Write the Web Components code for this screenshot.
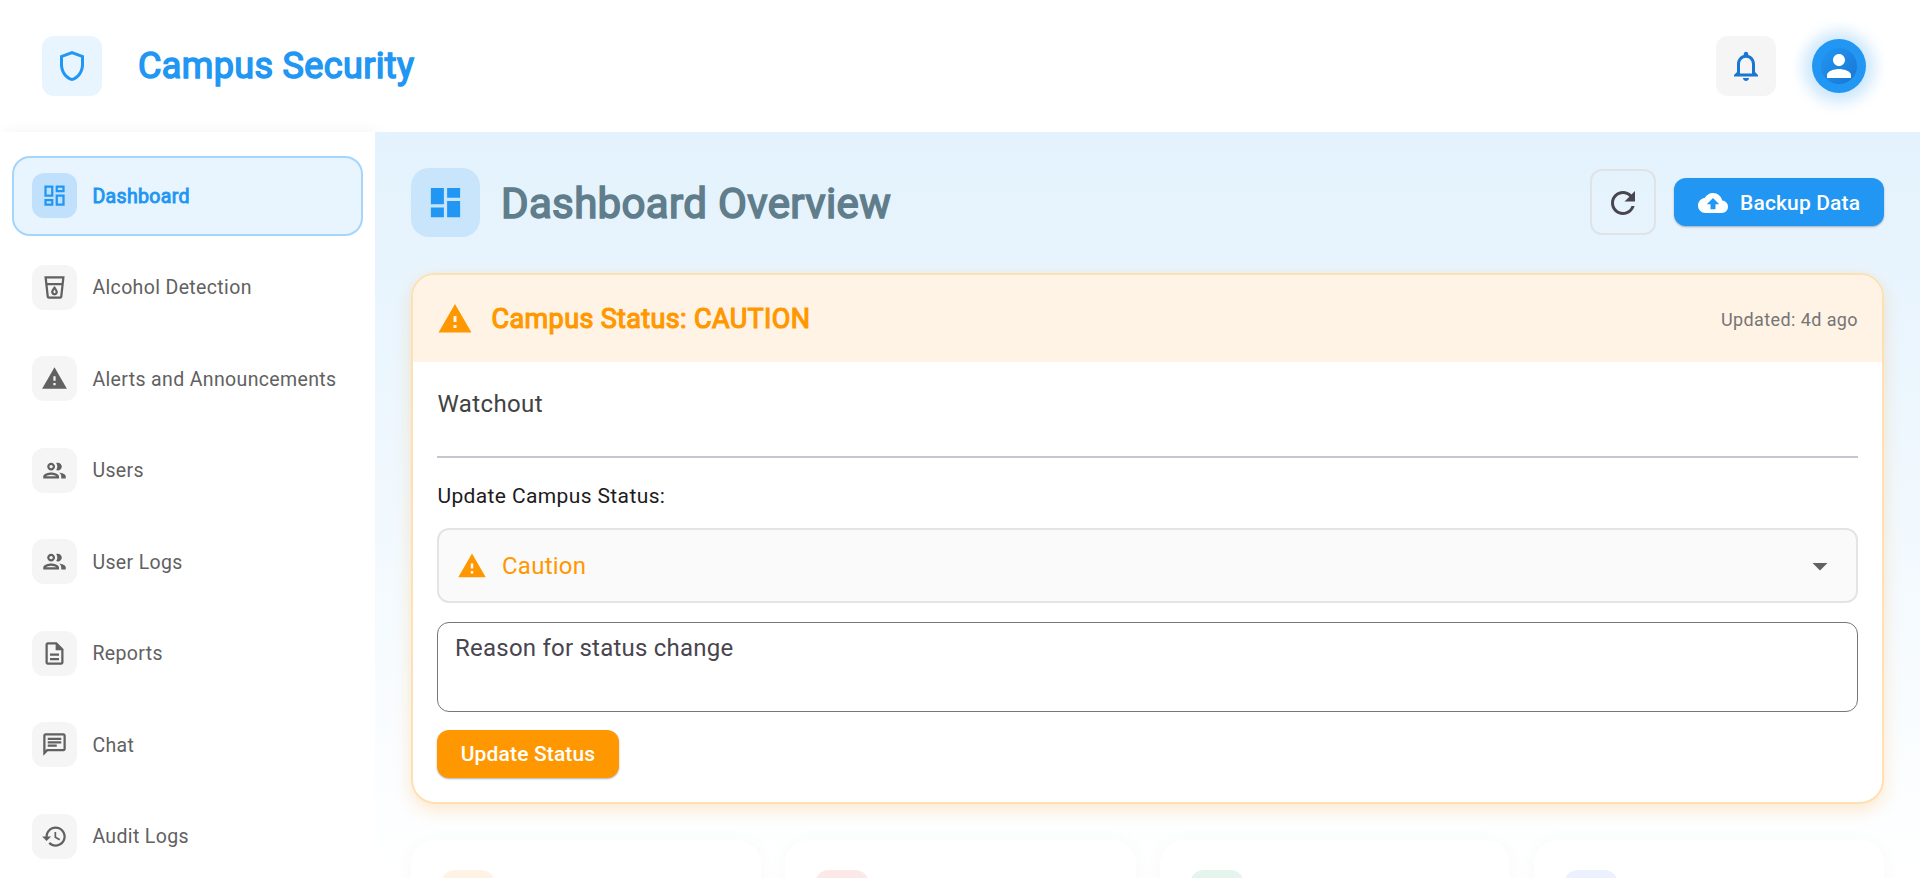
<!DOCTYPE html>
<html lang="en">
<head>
<meta charset="utf-8">
<title>Campus Security</title>
<style>
html,body{margin:0;height:100%;overflow:hidden;background:#fff;font-family:Roboto,"Liberation Sans",sans-serif}
</style>
</head>
<body>
<campus-app></campus-app>
<script>
const ICONS={
shield:'<path d="M12 2 4 5v6.09c0 5.05 3.41 9.76 8 10.91 4.59-1.15 8-5.86 8-10.91V5l-8-3zm6 9.09c0 4-2.55 7.7-6 8.83-3.45-1.13-6-4.82-6-8.83v-4.7l6-2.25 6 2.25v4.7z"/>',
bell:'<path d="M12 22c1.1 0 2-.9 2-2h-4c0 1.1.9 2 2 2zm6-6v-5c0-3.07-1.63-5.64-4.5-6.32V4c0-.83-.67-1.5-1.5-1.5s-1.5.67-1.5 1.5v.68C7.64 5.36 6 7.92 6 11v5l-2 2v1h16v-1l-2-2zm-2 1H8v-6c0-2.48 1.51-4.5 4-4.5s4 2.02 4 4.5v6z"/>',
person:'<path d="M12 12c2.21 0 4-1.79 4-4s-1.79-4-4-4-4 1.79-4 4 1.79 4 4 4zm0 2c-2.67 0-8 1.34-8 4v2h16v-2c0-2.66-5.33-4-8-4z"/>',
dashOut:'<path d="M19 5v2h-4V5h4M9 5v6H5V5h4m10 8v6h-4v-6h4M9 17v2H5v-2h4M21 3h-8v6h8V3zM11 3H3v10h8V3zm10 8h-8v10h8V11zm-10 4H3v6h8v-6z"/>',
dash:'<path d="M3 13h8V3H3v10zm0 8h8v-6H3v6zm10 0h8V11h-8v10zm0-18v6h8V3h-8z"/>',
drink:'<path d="M3 2l2.01 18.23C5.13 21.23 5.97 22 7 22h10c1.03 0 1.87-.77 1.99-1.77L21 2H3zm14 18H7.01L5.89 10h12.23L17 20zm1.33-12H5.67l-.44-4h13.54l-.44 4zM12 19c1.66 0 3-1.34 3-3 0-2-3-5.4-3-5.4S9 14 9 16c0 1.66 1.34 3 3 3zm0-5.22c.62.89 1 1.7 1 2.22 0 .55-.45 1-1 1s-1-.45-1-1c0-.52.38-1.33 1-2.22z"/>',
warn:'<path d="M1 21h22L12 2 1 21zm12-3h-2v-2h2v2zm0-4h-2v-4h2v4z"/>',
people:'<path d="M9 13.75c-2.34 0-7 1.17-7 3.5V19h14v-1.75c0-2.33-4.66-3.5-7-3.5zM4.34 17c.84-.58 2.87-1.25 4.66-1.25s3.82.67 4.66 1.25H4.34zM9 12c1.93 0 3.5-1.57 3.5-3.5S10.93 5 9 5 5.5 6.57 5.5 8.5 7.07 12 9 12zm0-5c.83 0 1.5.67 1.5 1.5S9.83 10 9 10s-1.5-.67-1.5-1.5S8.17 7 9 7zm7.04 6.81c1.16.84 1.96 1.96 1.96 3.44V19h4v-1.75c0-2.02-3.5-3.17-5.96-3.44zM15 12c1.93 0 3.5-1.57 3.5-3.5S16.93 5 15 5c-.54 0-1.04.13-1.5.35.63.89 1 1.98 1 3.15s-.37 2.26-1 3.15c.46.22.96.35 1.5.35z"/>',
doc:'<path d="M8 16h8v2H8zm0-4h8v2H8zm6-10H6c-1.1 0-2 .9-2 2v16c0 1.1.89 2 1.99 2H18c1.1 0 2-.9 2-2V8l-6-6zm4 18H6V4h7v5h5v11z"/>',
chat:'<path d="M4 4h16v12H5.17L4 17.17V4m0-2c-1.1 0-1.99.9-1.99 2L2 22l4-4h14c1.1 0 2-.9 2-2V4c0-1.1-.9-2-2-2H4zm2 10h8v2H6v-2zm0-3h12v2H6V9zm0-3h12v2H6V6z"/>',
history:'<path d="M13 3c-4.97 0-9 4.03-9 9H1l3.89 3.89.07.14L9 12H6c0-3.87 3.13-7 7-7s7 3.13 7 7-3.13 7-7 7c-1.93 0-3.68-.79-4.94-2.06l-1.42 1.42C8.27 19.99 10.51 21 13 21c4.97 0 9-4.03 9-9s-4.03-9-9-9zm-1 5v5l4.25 2.52.77-1.28-3.52-2.09V8H12z"/>',
refresh:'<path d="M17.65 6.35C16.2 4.9 14.21 4 12 4c-4.42 0-7.99 3.58-7.99 8s3.57 8 7.99 8c3.73 0 6.84-2.55 7.73-6h-2.08c-.82 2.33-3.04 4-5.65 4-3.31 0-6-2.69-6-6s2.69-6 6-6c1.66 0 3.14.69 4.22 1.78L13 11h7V4l-2.35 2.35z"/>',
cloud:'<path d="M19.35 10.04C18.67 6.59 15.64 4 12 4 9.11 4 6.6 5.64 5.35 8.04 2.34 8.36 0 10.91 0 14c0 3.31 2.69 6 6 6h13c2.76 0 5-2.24 5-5 0-2.64-2.05-4.78-4.65-4.96zM14 13v4h-4v-4H7l5-5 5 5h-3z"/>',
drop:'<path d="M7 10l5 5 5-5z"/>'
};
const attr=(e,n)=>e.getAttribute(n)||'';
function define(name,css,html){
  customElements.define(name,class extends HTMLElement{
    constructor(){
      super();
      const t=document.createElement('template');
      t.innerHTML='<style>'+css+'</style>'+html;
      this.attachShadow({mode:'open'}).append(t.content.cloneNode(true));
    }
  });
}

customElements.define('md-icon',class extends HTMLElement{
  connectedCallback(){
    if(this.shadowRoot)return;
    const s=attr(this,'size')||24;
    this.attachShadow({mode:'open'}).innerHTML=
      `<style>:host{display:block;flex:none;width:${s}px;height:${s}px}svg{display:block;width:100%;height:100%;fill:currentColor}</style><svg viewBox="0 0 24 24">${ICONS[attr(this,'name')]}</svg>`;
  }
});

define('app-header',`
:host{display:flex;align-items:center;height:132px;padding:0 54px 0 42px;box-sizing:border-box;background:#fff}
.box{width:60px;height:60px;border-radius:12px;display:grid;place-items:center;background:#e8f4fe;color:#2196f3}
h1{margin:0 auto 0 36px;font-size:36px;font-weight:400;line-height:48px;letter-spacing:.35px;color:#2196f3;-webkit-text-stroke:1.5px #2196f3;white-space:nowrap}
.bell{background:#f5f5f5;color:#1976d2}
.avatar{margin-left:36px;width:54px;height:54px;border-radius:50%;background:#2196f3;display:grid;place-items:center;box-shadow:0 1px 14px 9px rgba(33,150,243,.22)}
.inner{width:36px;height:36px;border-radius:50%;background:linear-gradient(135deg,#2196f3,#1976d2);color:#fff}
`,`<div class="box"><md-icon name="shield" size="36"></md-icon></div><h1>Campus Security</h1>
<div class="box bell"><md-icon name="bell" size="36"></md-icon></div>
<div class="avatar"><div class="inner"><md-icon name="person" size="36"></md-icon></div></div>`);

define('nav-item',`
:host{display:flex;align-items:center;box-sizing:border-box;height:79.5px;padding:0 18px 0 18.4px;gap:15px;border:2.25px solid transparent;border-radius:18px;color:#616161;font-size:19.5px;letter-spacing:.36px;white-space:nowrap}
.tile{flex:none;width:45px;height:45px;border-radius:12px;background:#f5f5f5;display:grid;place-items:center}
.label{padding-top:.8px}
:host([active]){background:#e8f4fe;border-color:#a6d5fa;color:#2196f3}
:host([active]) .tile{background:#c0e0fc}
:host([active]) .label{-webkit-text-stroke:.9px #2196f3}
`,'<div class="tile"><slot name="icon"></slot></div><div class="label"><slot></slot></div>');

define('app-sidebar',`
:host{display:flex;flex-direction:column;gap:12px;box-sizing:border-box;width:375px;padding:24px 12px 0;background:#fff;box-shadow:3px 0 15px rgba(0,0,0,.05)}
nav-item{flex:none}
`,[['dashOut','Dashboard',1],['drink','Alcohol Detection'],['warn','Alerts and Announcements'],['people','Users'],['people','User Logs'],['doc','Reports'],['chat','Chat'],['history','Audit Logs']]
.map(([i,t,a])=>`<nav-item${a?' active':''}><md-icon slot="icon" name="${i}" size="27"></md-icon>${t}</nav-item>`).join(''));

define('page-title',`
:host{display:flex;align-items:center;height:69px}
.tile{width:69px;height:69px;border-radius:18px;background:#c9e5fb;color:#2196f3;display:grid;place-items:center}
h2{margin:0 auto 0 21px;padding-top:3px;font-size:42px;font-weight:400;line-height:56px;letter-spacing:.35px;color:#607d8b;-webkit-text-stroke:1.6px #607d8b}
.refresh{width:66px;height:66px;margin-bottom:1px;box-sizing:border-box;border:2px solid #dfe3e6;border-radius:12px;display:grid;place-items:center;color:#49454f}
.refresh md-icon{margin-top:1px}
.backup{margin-left:18px;margin-bottom:1px;width:210px;height:48px;box-sizing:border-box;border-radius:12px;background:#2196f3;color:#fff;display:flex;align-items:center;padding:1px 0 0 24px;gap:12px;font-size:21px;font-weight:500;letter-spacing:.15px;white-space:nowrap;box-shadow:0 1px 2px rgba(0,0,0,.3)}
.backup span{padding-top:1px}
`,`<div class="tile"><md-icon name="dash" size="39"></md-icon></div><h2>Dashboard Overview</h2>
<div class="refresh"><md-icon name="refresh" size="36"></md-icon></div>
<div class="backup"><md-icon name="cloud" size="30"></md-icon><span>Backup Data</span></div>`);

define('status-card',`
:host{display:block;box-sizing:border-box;height:531px;margin-top:36px;border:2.25px solid #ffe0b2;border-radius:24px;background:#fff;box-shadow:0 6px 18px rgba(255,152,0,.2);overflow:hidden}
header{display:flex;align-items:center;height:87px;padding:0 24px;background:#fff3e5;color:#ff9800}
h3{margin:0 auto 0 18.6px;font-size:27px;font-weight:400;letter-spacing:.36px;-webkit-text-stroke:1.2px #ff9800}
.upd{padding-top:1.5px;font-size:18px;letter-spacing:.4px;color:#757575}
.body{padding:24px;display:flex;flex-direction:column}
.msg{padding-left:.5px;font-size:24px;line-height:36px;letter-spacing:.38px;color:#424242}
hr{margin:34px 0 0;border:0;height:2px;width:100%;background:#cac4d0}
.lab{margin-top:23px;padding-left:.4px;font-size:21px;line-height:30px;letter-spacing:.38px;color:#1d1b20}
.select{margin-top:17px;height:75px;box-sizing:border-box;border:2px solid #e4e4e4;border-radius:12px;background:#fafafa;display:flex;align-items:center;padding:0 18px;color:#ff9800;font-size:24px;letter-spacing:.25px}
.select span{margin:0 auto 0 15px}
.select .arrow{color:#616161}
.area{margin-top:19px;height:90px;box-sizing:border-box;border:1.5px solid #79747e;border-radius:12px;padding:7px 17px 4px;font-size:24px;line-height:36px;letter-spacing:.23px;color:#49454f}
.btn{margin-top:18px;width:182px;height:48px;border-radius:12px;background:#ff9800;color:#fff;display:grid;place-items:center;font-size:21px;font-weight:500;letter-spacing:.15px;box-shadow:0 1px 2px rgba(0,0,0,.3)}
`,`<header><md-icon name="warn" size="36"></md-icon><h3>Campus Status: CAUTION</h3><span class="upd">Updated: 4d ago</span></header>
<div class="body"><div class="msg">Watchout</div><hr><div class="lab">Update Campus Status:</div>
<div class="select"><md-icon name="warn" size="30"></md-icon><span>Caution</span><md-icon class="arrow" name="drop" size="36"></md-icon></div>
<div class="area">Reason for status change</div><div class="btn">Update Status</div></div>`);

define('stat-card',`
:host{display:block;height:220px;box-sizing:border-box;padding:30px;border-radius:24px;background:#fff;box-shadow:0 3px 22px rgba(0,0,0,.03)}
.tile{width:54px;height:54px;border-radius:14px;background:var(--tint)}
`,'<div class="tile"></div>');

define('app-main',`
:host{display:block;box-sizing:border-box;flex:1;position:relative;overflow:hidden;padding:36px;background:linear-gradient(#e3f2fd,#fff)}
.stats{display:grid;grid-template-columns:repeat(4,1fr);gap:24px;margin-top:36px}
`,`<page-title></page-title><status-card></status-card><div class="stats">
<stat-card style="--tint:#fff3e5"></stat-card><stat-card style="--tint:#fde8e8"></stat-card><stat-card style="--tint:#e6f4ee"></stat-card><stat-card style="--tint:#ebf1fe"></stat-card></div>`);

define('campus-app',`
:host{display:flex;flex-direction:column;height:878px;overflow:hidden}
.row{display:flex;flex:1;min-height:0}
`,`<app-header></app-header><div class="row"><app-sidebar></app-sidebar><app-main></app-main></div>`);
</script>
</body>
</html>
